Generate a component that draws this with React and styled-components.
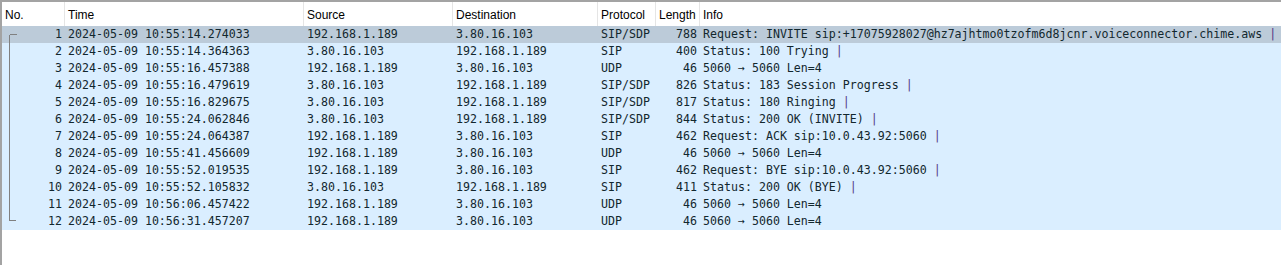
import React from "react";
import styled, { createGlobalStyle } from "styled-components";

const Global = createGlobalStyle`
  html, body { margin: 0; padding: 0; background: #ffffff; }
  body { width: 1284px; height: 265px; overflow: hidden; }
`;

const COLS = "63px 239px 149px 145px 58px 44px 1fr";

const Pane = styled.div`
  width: 1281px;
  height: 265px;
  box-sizing: border-box;
  border-top: 2px solid #a3a3a3;
  border-left: 2px solid #a3a3a3;
  background: #ffffff;
`;

const Header = styled.div`
  display: grid;
  grid-template-columns: ${COLS};
  height: 24px;
  background: #ffffff;
`;

const HeadCell = styled.div`
  box-sizing: border-box;
  padding: 2px 3px 0 3px;
  display: flex;
  align-items: center;
  border-right: ${(p) => (p.$last ? "none" : "1px solid #e5e5e5")};
  font-family: "Liberation Sans", Arial, sans-serif;
  font-size: 12px;
  color: #000000;
  white-space: nowrap;
  overflow: hidden;
`;

const Row = styled.div`
  display: grid;
  grid-template-columns: ${COLS};
  height: 17px;
  background: ${(p) => (p.$selected ? "#bccbd9" : "#daeeff")};
  color: #12272e;
  font-family: "DejaVu Sans Mono", "Liberation Mono", monospace;
  font-size: 11.62px;
  line-height: 17px;
`;

const Cell = styled.div`
  box-sizing: border-box;
  padding: 0 ${(p) => (p.$right ? "3px" : "0")} 0 ${(p) => (p.$right ? "0" : "3px")};
  text-align: ${(p) => (p.$right ? "right" : "left")};
  white-space: pre;
  overflow: hidden;
`;

const NoCell = styled.div`
  display: flex;
  align-items: stretch;
  justify-content: space-between;
  padding-right: 3px;
  box-sizing: border-box;
`;

const RelMark = styled.svg`
  display: block;
  margin-left: 7px;
  width: 10px;
  height: 17px;
  flex: none;
`;

const Bar = styled.span`
  color: #553c88;
`;

function Related({ kind }) {
  const c = "#808080";
  return (
    <RelMark viewBox="0 0 10 17" shapeRendering="crispEdges">
      {kind === "first" && (
        <>
          <line x1="0.5" y1="8.5" x2="8" y2="8.5" stroke={c} strokeWidth="1" />
          <line x1="0.5" y1="8.5" x2="0.5" y2="17" stroke={c} strokeWidth="1" />
        </>
      )}
      {kind === "mid" && (
        <line x1="0.5" y1="0" x2="0.5" y2="17" stroke={c} strokeWidth="1" />
      )}
      {kind === "last" && (
        <>
          <line x1="0.5" y1="0" x2="0.5" y2="8" stroke={c} strokeWidth="1" />
          <line x1="0.5" y1="7.5" x2="7" y2="7.5" stroke={c} strokeWidth="1" />
        </>
      )}
    </RelMark>
  );
}

const packets = [
  [1, "10:55:14.274033", "192.168.1.189", "3.80.16.103", "SIP/SDP", 788, "Request: INVITE sip:+17075928027@hz7ajhtmo0tzofm6d8jcnr.voiceconnector.chime.aws", true],
  [2, "10:55:14.364363", "3.80.16.103", "192.168.1.189", "SIP", 400, "Status: 100 Trying", true],
  [3, "10:55:16.457388", "192.168.1.189", "3.80.16.103", "UDP", 46, "5060 → 5060 Len=4", false],
  [4, "10:55:16.479619", "3.80.16.103", "192.168.1.189", "SIP/SDP", 826, "Status: 183 Session Progress", true],
  [5, "10:55:16.829675", "3.80.16.103", "192.168.1.189", "SIP/SDP", 817, "Status: 180 Ringing", true],
  [6, "10:55:24.062846", "3.80.16.103", "192.168.1.189", "SIP/SDP", 844, "Status: 200 OK (INVITE)", true],
  [7, "10:55:24.064387", "192.168.1.189", "3.80.16.103", "SIP", 462, "Request: ACK sip:10.0.43.92:5060", true],
  [8, "10:55:41.456609", "192.168.1.189", "3.80.16.103", "UDP", 46, "5060 → 5060 Len=4", false],
  [9, "10:55:52.019535", "192.168.1.189", "3.80.16.103", "SIP", 462, "Request: BYE sip:10.0.43.92:5060", true],
  [10, "10:55:52.105832", "3.80.16.103", "192.168.1.189", "SIP", 411, "Status: 200 OK (BYE)", true],
  [11, "10:56:06.457422", "192.168.1.189", "3.80.16.103", "UDP", 46, "5060 → 5060 Len=4", false],
  [12, "10:56:31.457207", "192.168.1.189", "3.80.16.103", "UDP", 46, "5060 → 5060 Len=4", false],
];

export default function App() {
  const heads = ["No.", "Time", "Source", "Destination", "Protocol", "Length", "Info"];
  return (
    <>
      <Global />
      <Pane>
        <Header>
          {heads.map((h, i) => (
            <HeadCell key={h} $last={i === heads.length - 1}>
              {h}
            </HeadCell>
          ))}
        </Header>
        {packets.map(([no, time, src, dst, proto, len, info, bar], i) => (
          <Row key={no} $selected={i === 0}>
            <NoCell>
              <Related kind={i === 0 ? "first" : i === packets.length - 1 ? "last" : "mid"} />
              <span>{no}</span>
            </NoCell>
            <Cell>2024-05-09 {time}</Cell>
            <Cell>{src}</Cell>
            <Cell>{dst}</Cell>
            <Cell>{proto}</Cell>
            <Cell $right>{len}</Cell>
            <Cell>
              {info}
              {bar && (
                <>
                  {" "}
                  <Bar>|</Bar>
                </>
              )}
            </Cell>
          </Row>
        ))}
      </Pane>
    </>
  );
}
